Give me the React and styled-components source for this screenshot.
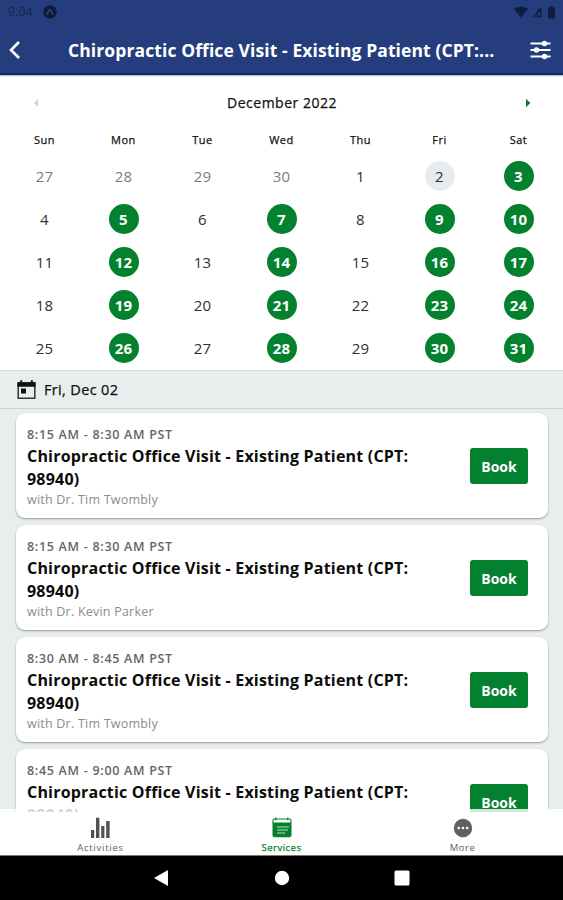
import React from 'react';
import styled, { createGlobalStyle } from 'styled-components';

const GREEN = '#04812f';

const Global = createGlobalStyle`
  * { box-sizing: border-box; }
  html, body { margin: 0; padding: 0; }
  body { font-family: "Open Sans", "Noto Sans", sans-serif; color: #111; overflow: hidden; }
  svg { display: block; }
`;

const Label = styled.span`
  display: block;
  white-space: nowrap;
  font-size: ${(p) => p.$size}px;
  font-weight: ${(p) => p.$weight || 400};
  letter-spacing: ${(p) => p.$track || 0}px;
  line-height: ${(p) => p.$line || 20}px;
  color: ${(p) => p.$color || 'inherit'};
  -webkit-text-stroke: ${(p) => (p.$weight === 500 ? 0.25 : 0)}px currentColor;
`;

const Screen = styled.div`
  width: 563px;
  height: 900px;
  display: flex;
  flex-direction: column;
  background: #e8eded;
  overflow: hidden;
`;

const Header = styled.header`
  flex: 0 0 75px;
  background: #253d7d;
  box-shadow: inset 0 -2px 0 #0d2c70, 0 1px 1px rgba(20, 40, 100, 0.3);
  z-index: 1;
`;

const StatusBar = styled.div`
  height: 24px;
  display: flex;
  align-items: center;
  justify-content: space-between;
  padding: 0 5px 0 8px;
`;

const StatusGroup = styled.div`
  display: flex;
  align-items: center;
  gap: ${(p) => p.$gap}px;
`;

const TitleBar = styled.div`
  height: 51px;
  display: flex;
  align-items: center;
  padding: 0 12px 0 8px;
`;

const IconButton = styled.button`
  border: 0;
  padding: 0;
  background: none;
  width: 21px;
`;

const HeaderTitle = styled.h1`
  flex: 1;
  margin: 0 0 0 39px;
  color: #fff;
`;

const Calendar = styled.section`
  flex: 0 0 295px;
  background: #fff;
`;

const MonthRow = styled.div`
  height: 53px;
  display: flex;
  align-items: center;
  justify-content: space-between;
  padding: 2px 32px 0 33px;
`;

const Grid = styled.div`
  display: grid;
  grid-template-columns: repeat(7, 79px);
  grid-auto-rows: ${(p) => p.$row}px;
  padding: ${(p) => p.$top || 0}px 0 0 5px;
  justify-items: center;
  align-items: center;
`;

const Day = styled.div`
  width: 30px;
  height: 30px;
  border-radius: 50%;
  display: flex;
  align-items: center;
  justify-content: center;
  font-size: 15px;
  letter-spacing: 0.2px;
  font-weight: ${(p) => (p.$kind === 'open' ? 700 : 400)};
  color: ${(p) => ({ open: '#fff', muted: '#7c7c7c' }[p.$kind] || '#303030')};
  background: ${(p) => ({ open: GREEN, selected: '#e8ebed' }[p.$kind] || 'transparent')};
`;

const DateBar = styled.div`
  flex: 0 0 39px;
  display: flex;
  align-items: center;
  gap: 8px;
  padding-left: 17px;
  border-top: 1px solid #d9dddd;
  border-bottom: 1px solid #cbd0d1;
`;

const List = styled.main`
  flex: 1 1 0;
  min-height: 0;
  margin-bottom: -3px;
  overflow: hidden;
  padding: 4px 15.5px 0;
  display: flex;
  flex-direction: column;
  gap: 7px;
`;

const Card = styled.article`
  flex: 0 0 105px;
  display: flex;
  align-items: center;
  justify-content: space-between;
  padding: 1px 19.5px 0 11.5px;
  border-radius: 9px;
  background: #fff;
  box-shadow: 0 1px 2px rgba(0, 0, 0, 0.36);
`;

const Details = styled.div`
  padding-top: 2px;
`;

const BookButton = styled.button`
  width: 58px;
  height: 36px;
  border: 0;
  border-radius: 3px;
  padding: 2px 0 0;
  background: ${GREEN};
  color: #fff;
  font-family: inherit;
`;

const TabBar = styled.nav`
  flex: 0 0 46px;
  min-height: 0;
  z-index: 1;
  display: grid;
  grid-template-columns: 201px 161px 201px;
  grid-template-rows: 46px;
  background: linear-gradient(rgba(255, 255, 255, 0.82) 3px, #fff 3px);
`;

const Tab = styled.div`
  display: flex;
  flex-direction: column;
  align-items: center;
  gap: 2px;
  padding-top: 8px;
  color: ${(p) => (p.$active ? GREEN : '#606060')};
`;

const SystemNav = styled.footer`
  flex: 0 0 45px;
  display: flex;
  align-items: center;
  justify-content: center;
  background: #000;
  border-top: 1px solid #777;
`;

const Arrow = ({ color, left }) => (
  <svg width="6" height="10" viewBox="0 0 6 10">
    <path d={left ? 'M5 1 1 5l4 4z' : 'M1 .7 5.4 5 1 9.3z'} fill={color} />
  </svg>
);

const weekdays = ['Sun', 'Mon', 'Tue', 'Wed', 'Thu', 'Fri', 'Sat'];
const days = [27, 28, 29, 30, ...Array.from({ length: 31 }, (_, i) => i + 1)];

const kindOf = (index) => {
  if (index < 4) return 'muted';
  if (index === 5) return 'selected';
  if (index === 6) return 'open';
  return index > 6 && [1, 3, 5, 6].includes(index % 7) ? 'open' : 'plain';
};

const visits = [
  ['8:15 AM - 8:30 AM PST', 'with Dr. Tim Twombly'],
  ['8:15 AM - 8:30 AM PST', 'with Dr. Kevin Parker'],
  ['8:30 AM - 8:45 AM PST', 'with Dr. Tim Twombly'],
  ['8:45 AM - 9:00 AM PST'],
];

export default function App() {
  return (
    <>
      <Global />
      <Screen>
        <Header>
          <StatusBar>
            <StatusGroup $gap={10}>
              <Label $size={12} $track={0.3} $color="#152653">9:04</Label>
              <svg width="14" height="14" viewBox="0 0 14 14">
                <circle cx="7" cy="7" r="6.8" fill="#0f1b3a" />
                <path d="M4 9.6C5.3 8 6 4.4 7 4.4S8.7 8 10 9.6" fill="none" stroke="#344b88" strokeWidth="1.4" />
              </svg>
            </StatusGroup>
            <StatusGroup $gap={2}>
              <svg width="14" height="12" viewBox="0 0 14 12"><path d="M0 3Q7-2 14 3L7 11.6z" fill="#101c3c" /></svg>
              <svg width="12" height="12" viewBox="0 0 12 12">
                <path d="M1 11.2 11.2 1v10.2z" fill="#1a2b5c" />
                <path d="M7.2 5.2 11.2 1v10.2h-4z" fill="#101c3c" />
                <path d="M8.3 6.2h1.6v3.5H8.3z" fill="#2b4380" />
              </svg>
              <svg width="14" height="13" viewBox="0 0 14 13"><path d="M4 1.5h2V.3h3v1.2h2v11H4z" fill="#101c3c" /></svg>
            </StatusGroup>
          </StatusBar>
          <TitleBar>
            <IconButton aria-label="Back">
              <svg width="14" height="20" viewBox="0 0 14 20"><path d="M11 2 3 10l8 8" fill="none" stroke="#fff" strokeWidth="2.6" /></svg>
            </IconButton>
            <HeaderTitle>
              <Label $size={17.5} $weight={700} $track={0.1}>Chiropractic Office Visit - Existing Patient (CPT:...</Label>
            </HeaderTitle>
            <IconButton aria-label="Filters">
              <svg width="21" height="20" viewBox="0 0 21 20" stroke="#fff" strokeWidth="1.8" fill="#fff">
                <path d="M.5 3.5h20M.5 10h20M.5 16.5h20" />
                <circle cx="14.5" cy="3.5" r="1.8" /><circle cx="6.5" cy="10" r="1.8" /><circle cx="14.5" cy="16.5" r="1.8" />
              </svg>
            </IconButton>
          </TitleBar>
        </Header>

        <Calendar>
          <MonthRow>
            <Arrow left color="#ccd0d5" />
            <Label $size={14} $weight={500} $track={0.5}>December 2022</Label>
            <Arrow color={GREEN} />
          </MonthRow>
          <Grid $row={24}>
            {weekdays.map((d) => <Label key={d} $size={11} $weight={500} $track={0.5}>{d}</Label>)}
          </Grid>
          <Grid $row={43} $top={2}>
            {days.map((d, i) => <Day key={i} $kind={kindOf(i)}>{d}</Day>)}
          </Grid>
        </Calendar>

        <DateBar>
          <svg width="19" height="20" viewBox="0 0 19 20">
            <path d="M1.2 3h16.6v15.3H1.2z" fill="none" stroke="#333" strokeWidth="1.5" />
            <path d="M.4 2.3h18.2v4.4H.4zM3.2.3h2v3h-2zM13.8.3h2v3h-2zM4 8.5h5v5H4z" fill="#111" />
          </svg>
          <Label $size={14.5} $weight={500} $track={0.35}>Fri, Dec 02</Label>
        </DateBar>

        <List>
          {visits.map(([time, who], i) => (
            <Card key={i}>
              <Details>
                <Label $size={12.5} $weight={600} $track={0.7} $line={20} $color="#666">{time}</Label>
                <Label $size={16} $weight={700} $track={0.2} $line={23} $color="#0c0c0c">Chiropractic Office Visit - Existing Patient (CPT:</Label>
                <Label $size={16} $weight={700} $track={0.2} $line={23} $color="#0c0c0c">98940)</Label>
                <Label $size={12.5} $track={0.22} $line={18} $color="#8c8c8c">{who || '\u00a0'}</Label>
              </Details>
              <BookButton><Label $size={14} $weight={700}>Book</Label></BookButton>
            </Card>
          ))}
        </List>

        <TabBar>
          <Tab>
            <svg width="20" height="22" viewBox="0 0 20 22" fill="#505050">
              <path d="M0 13h3.2v8H0zM5 .8h3.4V21H5zM10.2 9h3.2v12h-3.2zM15.2 4h3.4v17h-3.4z" />
            </svg>
            <Label $size={9.5} $track={0.75} $line={14}>Activities</Label>
          </Tab>
          <Tab $active>
            <svg width="20" height="22" viewBox="0 0 20 22">
              <path d="M1 6V3.3Q1 2 2.3 2h15.4Q19 2 19 3.3V6" fill="none" stroke={GREEN} strokeWidth="1.1" />
              <path d="M3.8.6v2.6M15.8.6v2.6" stroke={GREEN} strokeWidth="1.3" />
              <path d="M.5 5.6h19v12.6q0 2-2 2h-15q-2 0-2-2z" fill={GREEN} />
              <path d="M5 10h12M5 13h11M5 16h8" stroke="#b7dcc2" strokeWidth="1.2" />
            </svg>
            <Label $size={9.5} $weight={500} $track={0.5} $line={14}>Services</Label>
          </Tab>
          <Tab>
            <svg width="20" height="22" viewBox="0 0 20 22">
              <circle cx="10" cy="11" r="9.2" fill="#606060" />
              <g fill="#fff"><circle cx="5.8" cy="11" r="1.3" /><circle cx="10" cy="11" r="1.3" /><circle cx="14.2" cy="11" r="1.3" /></g>
            </svg>
            <Label $size={9.5} $track={0.5} $line={14}>More</Label>
          </Tab>
        </TabBar>

        <SystemNav>
          <svg width="258" height="20" viewBox="0 0 258 20" fill="#fff">
            <path d="M15 2v16L1 10z" />
            <circle cx="129" cy="10" r="7.2" />
            <rect x="241.5" y="2.5" width="15" height="15" rx="1.5" />
          </svg>
        </SystemNav>
      </Screen>
    </>
  );
}
